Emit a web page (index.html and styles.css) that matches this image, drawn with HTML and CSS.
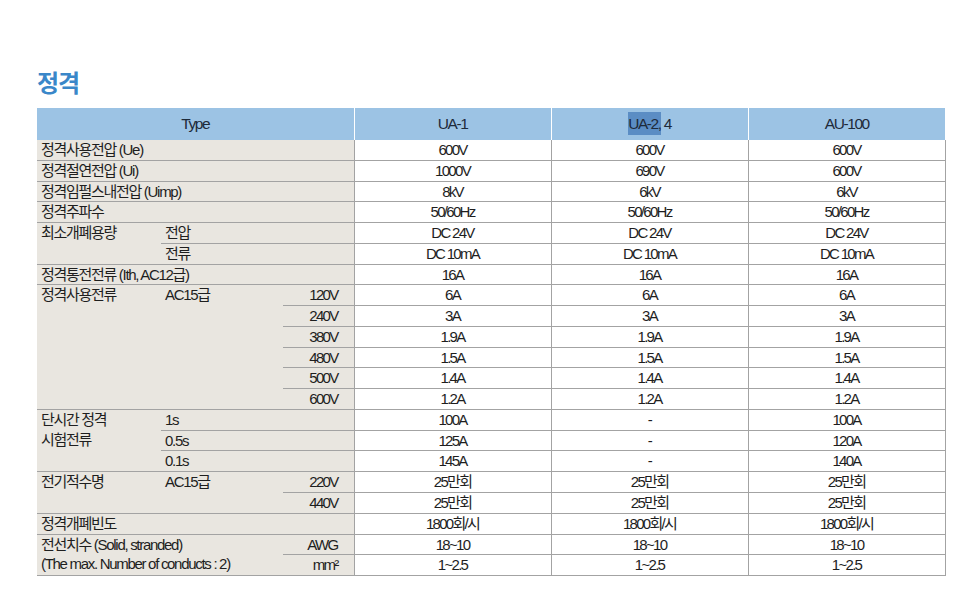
FILE: index.html
```html
<!DOCTYPE html>
<html lang="ko">
<head>
<meta charset="utf-8">
<title>정격</title>
<link rel="stylesheet" href="styles.css">
</head>
<body>
<div class="page">
  <h1 class="title">정격</h1>
  <table class="spec">
    <colgroup>
      <col class="c1"><col class="c2"><col class="c3">
      <col class="cd"><col class="cd"><col class="cd">
    </colgroup>
    <thead>
      <tr class="head">
        <th colspan="3">Type</th>
        <th>UA-1</th>
        <th><span class="sel">UA-2,</span> 4</th>
        <th>AU-100</th>
      </tr>
    </thead>
    <tbody>
      <tr><td class="lb" colspan="3">정격사용전압 (Ue)</td><td>600V</td><td>600V</td><td>600V</td></tr>
      <tr><td class="lb" colspan="3">정격절연전압 (Ui)</td><td>1000V</td><td>690V</td><td>600V</td></tr>
      <tr><td class="lb" colspan="3">정격임펄스내전압 (Uimp)</td><td>8kV</td><td>6kV</td><td>6kV</td></tr>
      <tr><td class="lb" colspan="3">정격주파수</td><td>50/60Hz</td><td>50/60Hz</td><td>50/60Hz</td></tr>
      <tr><td class="lb top" rowspan="2">최소개폐용량</td><td class="lb" colspan="2">전압</td><td>DC 24V</td><td>DC 24V</td><td>DC 24V</td></tr>
      <tr><td class="lb" colspan="2">전류</td><td>DC 10mA</td><td>DC 10mA</td><td>DC 10mA</td></tr>
      <tr><td class="lb" colspan="3">정격통전전류 (Ith, AC12급)</td><td>16A</td><td>16A</td><td>16A</td></tr>
      <tr><td class="lb top" rowspan="6">정격사용전류</td><td class="lb top" rowspan="6">AC15급</td><td class="lb rt">120V</td><td>6A</td><td>6A</td><td>6A</td></tr>
      <tr><td class="lb rt">240V</td><td>3A</td><td>3A</td><td>3A</td></tr>
      <tr><td class="lb rt">380V</td><td>1.9A</td><td>1.9A</td><td>1.9A</td></tr>
      <tr><td class="lb rt">480V</td><td>1.5A</td><td>1.5A</td><td>1.5A</td></tr>
      <tr><td class="lb rt">500V</td><td>1.4A</td><td>1.4A</td><td>1.4A</td></tr>
      <tr><td class="lb rt">600V</td><td>1.2A</td><td>1.2A</td><td>1.2A</td></tr>
      <tr><td class="lb top" rowspan="3">단시간 정격<br>시험전류</td><td class="lb" colspan="2">1s</td><td>100A</td><td>-</td><td>100A</td></tr>
      <tr><td class="lb" colspan="2">0.5s</td><td>125A</td><td>-</td><td>120A</td></tr>
      <tr><td class="lb" colspan="2">0.1s</td><td>145A</td><td>-</td><td>140A</td></tr>
      <tr><td class="lb top" rowspan="2">전기적수명</td><td class="lb top" rowspan="2">AC15급</td><td class="lb rt">220V</td><td>25만회</td><td>25만회</td><td>25만회</td></tr>
      <tr><td class="lb rt">440V</td><td>25만회</td><td>25만회</td><td>25만회</td></tr>
      <tr><td class="lb" colspan="3">정격개폐빈도</td><td>1800회/시</td><td>1800회/시</td><td>1800회/시</td></tr>
      <tr><td class="lb top" rowspan="2" colspan="2">전선치수 (Solid, stranded)<br>(The max. Number of conducts : 2)</td><td class="lb rt">AWG</td><td>18~10</td><td>18~10</td><td>18~10</td></tr>
      <tr><td class="lb rt">mm²</td><td>1~2.5</td><td>1~2.5</td><td>1~2.5</td></tr>
    </tbody>
  </table>
</div>
</body>
</html>
```

FILE: styles.css
```css
html, body {
  margin: 0;
  padding: 0;
  background: #ffffff;
}

.page {
  padding: 68px 0 0 37px;
  font-family: "Liberation Sans", "Noto Sans CJK KR", sans-serif;
  color: #1e1e1e;
}

.title {
  margin: 0 0 12px 0;
  font-family: "Noto Sans CJK KR", sans-serif;
  font-size: 24px;
  font-weight: 700;
  line-height: 28px;
  letter-spacing: -1px;
  color: #3a87c9;
}

.spec {
  border-collapse: collapse;
  table-layout: fixed;
  width: 908px;
  font-size: 15px;
  letter-spacing: -1.7px;
}

.c1 { width: 124px; }
.c2 { width: 122px; }
.c3 { width: 71px; }
.cd { width: 197px; }

.head th {
  height: 32px;
  padding: 0;
  background: #9cc3e4;
  font-weight: 400;
  font-size: 15.5px;
  letter-spacing: -1.4px;
  text-align: center;
  vertical-align: middle;
  border-left: 1px solid #ffffff;
  color: #1e2a3a;
}

.head th:first-child {
  border-left: none;
}

.sel {
  background: #5b8dc4;
  padding: 3px 0;
}

.spec tbody tr {
  height: 19.76px;
}

.spec td {
  padding: 0;
  height: 19.76px;
  line-height: 19.76px;
  text-align: center;
  vertical-align: middle;
  border-bottom: 1px solid #a3a3a3;
  border-left: 1px solid #a3a3a3;
  border-right: 1px solid #a3a3a3;
  white-space: nowrap;
}

.spec td.lb {
  background: #e9e6e0;
  text-align: left;
  padding-left: 4px;
  letter-spacing: -1.3px;
  border-left: none;
  border-right: none;
}

.spec td.top {
  vertical-align: top;
}

.spec td.rt {
  text-align: right;
  padding-left: 0;
  padding-right: 16px;
  letter-spacing: -1.7px;
}
```
